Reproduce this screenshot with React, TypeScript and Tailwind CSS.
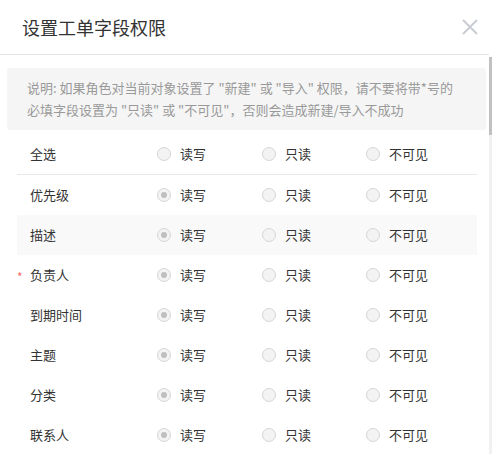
const rows: { label: string; required?: boolean; value: "rw" | "r" | "none" | null }[] = [
  { label: "优先级", value: "rw" },
  { label: "描述", value: "rw" },
  { label: "负责人", required: true, value: "rw" },
  { label: "到期时间", value: "rw" },
  { label: "主题", value: "rw" },
  { label: "分类", value: "rw" },
  { label: "联系人", value: "rw" },
];

function Radio({ checked, text }: { checked: boolean; text: string }) {
  return (
    <label className="flex items-center gap-[9px]">
      <span className="flex h-[14px] w-[14px] items-center justify-center rounded-full border border-[#d6d6d6] bg-[#f3f3f3]">
        {checked && <span className="h-[6px] w-[6px] rounded-full bg-[#bfbfbf]" />}
      </span>
      <span className="text-[13px] text-[#333]">{text}</span>
    </label>
  );
}

function Row({
  label,
  required,
  value,
  shaded,
  divider,
}: {
  label: string;
  required?: boolean;
  value: "rw" | "r" | "none" | null;
  shaded?: boolean;
  divider?: boolean;
}) {
  return (
    <div
      className={`grid h-[40px] grid-cols-[140px_105px_104px_1fr] items-center ${
        shaded ? "bg-[#f9f9f9]" : ""
      } ${divider ? "h-[41px] border-b border-[#e8e8e8]" : ""}`}
    >
      <div className="flex items-center">
        <span className="w-[13px] pt-[3px] text-[12px] leading-none text-[#f56c6c]">{required ? "*" : ""}</span>
        <span className="text-[13px] text-[#333]">{label}</span>
      </div>
      <Radio checked={value === "rw"} text="读写" />
      <Radio checked={value === "r"} text="只读" />
      <Radio checked={value === "none"} text="不可见" />
    </div>
  );
}

export default function App() {
  return (
    <div
      className="flex h-[454px] w-[492px] overflow-hidden bg-white"
      style={{ fontFamily: '"Microsoft YaHei", "Noto Sans CJK SC", sans-serif' }}
    >
      <div className="flex w-[489px] flex-col">
        {/* Header */}
        <div className="flex h-[55px] shrink-0 items-center justify-between border-b border-[#e5e5e5] pl-[22px] pr-[11px]">
          <h2 className="text-[18px] font-normal text-[#333]">设置工单字段权限</h2>
          <svg width="16" height="16" viewBox="0 0 16 16" className="mb-[1px]">
            <path d="M1 1 L15 15 M15 1 L1 15" stroke="#c9cdd2" strokeWidth="2" fill="none" />
          </svg>
        </div>

        {/* Body */}
        <div className="flex flex-col pt-[13px]">
          <div className="mx-[7px] mr-[3px] rounded-[3px] bg-[#f5f5f5] px-[20px] py-[9px] text-[13px] leading-[22px] text-[#999]">
            说明: 如果角色对当前对象设置了 "新建" 或 "导入" 权限，请不要将带*号的
            <br />
            必填字段设置为 "只读" 或 "不可见"，否则会造成新建/导入不成功
          </div>

          <div className="mx-[17px] mt-[4px] w-[460px]">
            <Row label="全选" value={null} divider />
            {rows.map((r, i) => (
              <Row key={r.label} label={r.label} required={r.required} value={r.value} shaded={i === 1} />
            ))}
          </div>
        </div>
      </div>

      {/* Scrollbar */}
      <div className="flex w-[3px] flex-col pt-[57px]">
        <div className="flex flex-1 flex-col bg-[#f1f1f1]">
          <div className="h-[78px] bg-[#c1c1c1]" />
        </div>
      </div>
    </div>
  );
}
